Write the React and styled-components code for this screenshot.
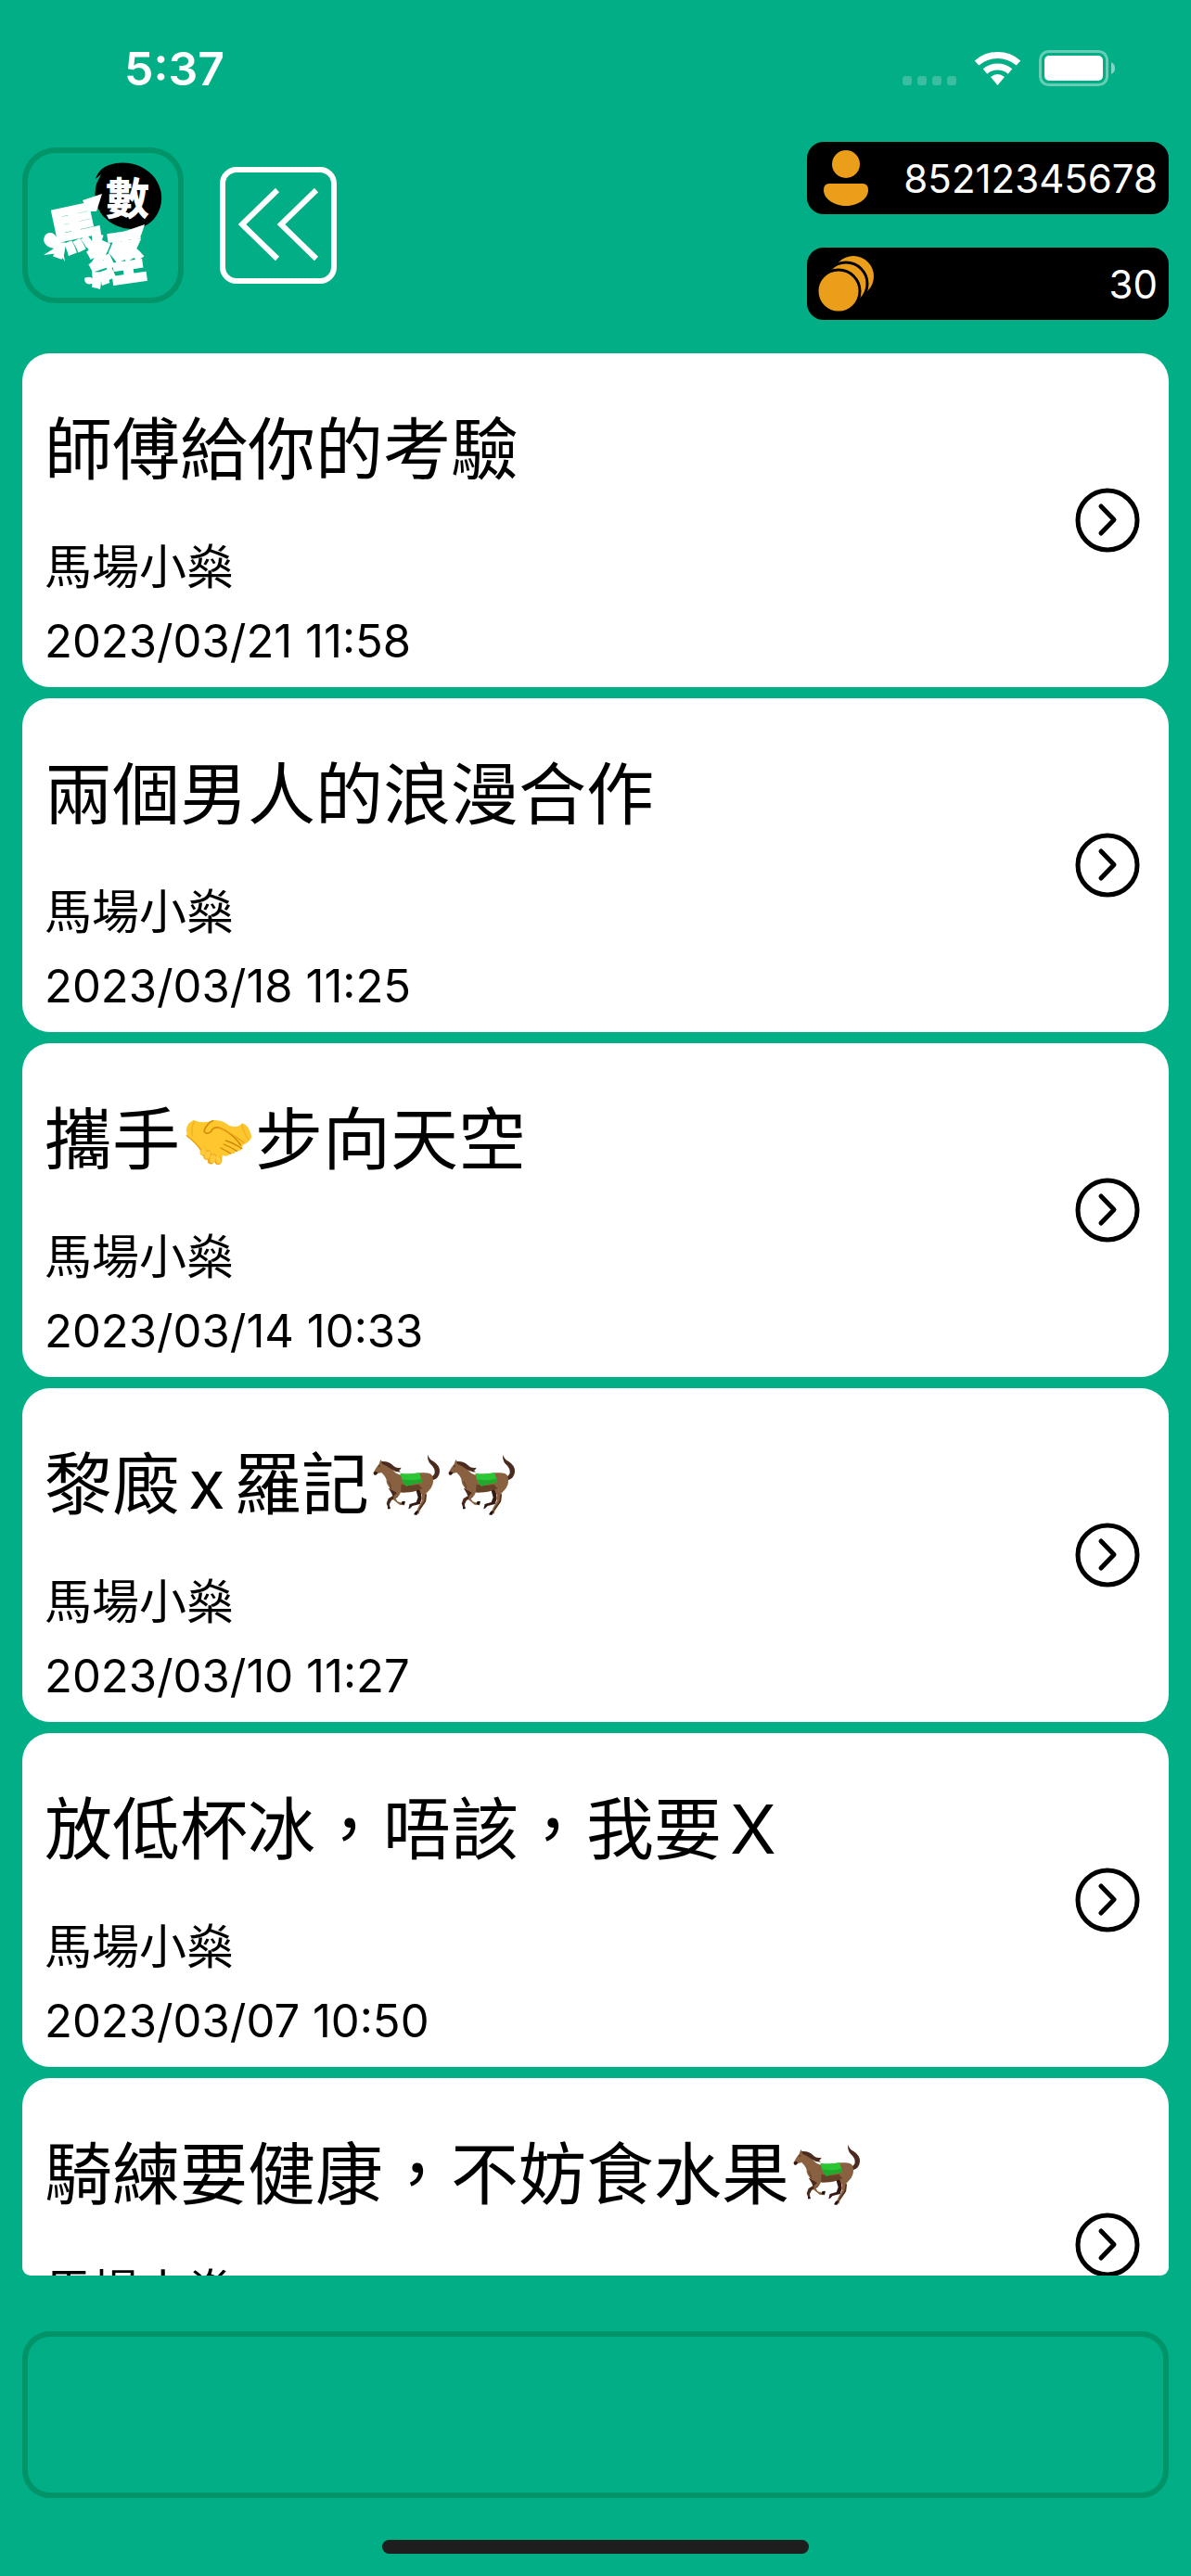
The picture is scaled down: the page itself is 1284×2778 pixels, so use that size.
import React from "react"
import styled, { createGlobalStyle } from "styled-components"

const articles = [
  { id: 1, title: ["師傅給你的考驗"], author: "馬場小燊", date: "2023/03/21 11:58" },
  { id: 2, title: ["兩個男人的浪漫合作"], author: "馬場小燊", date: "2023/03/18 11:25" },
  { id: 3, title: ["攜手", "handshake", "步向天空"], author: "馬場小燊", date: "2023/03/14 10:33" },
  { id: 4, title: ["黎廄x羅記", "horse", "horse"], author: "馬場小燊", date: "2023/03/10 11:27" },
  { id: 5, title: ["放低杯冰，唔該，我要X"], author: "馬場小燊", date: "2023/03/07 10:50" },
  { id: 6, title: ["騎練要健康，不妨食水果", "horse"], author: "馬場小燊" },
]

const Horse = () => (
  <Emoji viewBox="0 -6 243 222" role="img" aria-label="馬">
    <path d="M186 84 Q206 82 212 68 Q214 52 198 38 Q187 26 190 8 Q193 22 208 30 Q230 44 228 64 Q226 84 208 90Z" fill="#4b2b20" />
    <path d="M150 118 L158 146 L152 162 L131 168 L127 184 L132 182 L140 174 L164 168 L170 150 L166 120Z" fill="#351811" />
    <path d="M62 116 L72 132 L76 142 L62 150 L56 166 L62 184 L67 180 L66 168 L72 156 L92 146 L96 130Z" fill="#4a2a1c" />
    <path d="M14 66 Q20 52 32 38 L37 24 L44 34 Q66 44 82 64 Q94 76 114 74 L168 67 Q198 64 204 76 Q212 98 200 116 Q190 128 184 134 L184 158 L166 184 L160 200 L150 198 L158 180 L170 158 L170 138 L160 118 Q130 132 102 130 L96 142 L84 148 L92 160 L106 164 L116 160 L114 172 L98 170 L78 154 L80 142 L90 132 Q60 118 56 96 Q58 84 40 66 L24 70 Q14 80 14 66Z" fill="#8a6140" />
    <path d="M14 66 L22 62 L28 68 L22 74 Q14 76 14 66Z" fill="#2f1711" />
    <path d="M40 30 Q62 28 76 42 Q86 54 104 50 Q100 58 96 60 L102 64 Q86 66 70 54 Q54 42 42 38Z" fill="#4b2b20" />
    <path d="M104 104 Q132 112 160 104 L172 118 Q138 134 102 130Z" fill="#654128" />
    <path d="M62 94 Q72 108 70 122" stroke="#6c452c" strokeWidth="4" fill="none" />
    <path d="M184 136 L180 160 L162 186" stroke="#55301f" strokeWidth="5" fill="none" />
    <path d="M150 192 L160 188 L154 204 L144 202Z M60 178 L68 178 L68 184 L60 184Z M106 160 L116 158 L114 170 L104 168Z" fill="#21100c" />
    <circle cx="33" cy="45" r="2" fill="#1d0e0a" />
    <path d="M100 68 Q134 72 162 66 L172 98 Q146 100 120 110 L108 96Z" fill="#2ac634" />
    <path d="M108 88 Q138 94 168 86 L172 98 Q146 100 120 110 L108 96Z" fill="#22a92d" />
  </Emoji>
)

const Handshake = () => (
  <Emoji viewBox="0 -10 243 222" role="img" aria-label="握手">
    <path d="M20 68 Q26 44 44 38 Q76 52 108 38 Q138 36 160 56 Q190 64 202 48 Q222 52 232 92 Q224 112 204 118 L198 134 Q190 140 182 136 Q176 150 164 146 Q154 158 138 152 L134 168 Q136 180 124 182 Q112 182 112 170 Q110 180 98 180 Q88 178 90 166 Q76 168 76 154 Q62 152 66 138 Q58 120 24 92Z" fill="#fdc72d" />
    <path d="M66 132 Q78 124 86 136 Q98 130 102 148 Q116 144 118 154 Q134 150 136 168 Q134 182 124 182 Q112 182 112 170 Q108 182 98 180 Q88 178 90 166 Q76 168 76 154 Q62 152 66 132Z" fill="#efa920" />
    <g fill="#ffcb3c">
      <ellipse cx="75" cy="140" rx="8" ry="11" transform="rotate(20 75 140)" />
      <ellipse cx="89" cy="151" rx="9" ry="13" transform="rotate(18 89 151)" />
      <ellipse cx="106" cy="163" rx="9" ry="13" transform="rotate(12 106 163)" />
      <ellipse cx="124" cy="166" rx="8" ry="13" transform="rotate(-16 124 166)" />
    </g>
    <path d="M106 40 Q86 48 78 74 Q84 86 100 76 Q106 60 126 62 Q166 76 196 118" fill="none" stroke="#d48a0d" strokeWidth="5" strokeLinecap="round" />
    <path d="M148 104 Q174 112 200 130 M142 116 Q166 126 184 138 M132 128 Q152 138 164 146" fill="none" stroke="#cf850b" strokeWidth="4" strokeLinecap="round" />
    <path d="M22 88 Q58 116 66 132 M128 62 Q160 76 206 110" fill="none" stroke="#e9a21b" strokeWidth="4" strokeLinecap="round" />
    <path d="M46 42 Q36 62 40 88 M200 52 Q206 80 222 100" fill="none" stroke="#f2b122" strokeWidth="4" strokeLinecap="round" />
  </Emoji>
)

const emojis = { horse: Horse, handshake: Handshake }

const StatusIcons = () => (
  <svg width="230" height="42" viewBox="0 0 230 42" aria-hidden="true">
    <g fill="#fff" fillOpacity="0.22">
      <rect x="1" y="29" width="10" height="10" rx="3" />
      <rect x="17" y="29" width="10" height="10" rx="3" />
      <rect x="33" y="29" width="10" height="10" rx="3" />
      <rect x="49" y="29" width="10" height="10" rx="3" />
    </g>
    <g fill="none" stroke="#fff">
      <path d="M81 15 A34 34 0 0 1 126 15" strokeWidth="7" />
      <path d="M90 24 A21 21 0 0 1 117 24" strokeWidth="7" />
    </g>
    <path d="M96 30 Q103.500 24 111 30 L103.500 39Z" fill="#fff" />
    <rect x="149.500" y="2.500" width="72" height="36" rx="9" fill="none" stroke="#fff" strokeOpacity="0.4" strokeWidth="3" />
    <rect x="154" y="7" width="63" height="27" rx="5" fill="#fff" />
    <path d="M226 14 Q230 16 230 20.500 Q230 25 226 27Z" fill="#fff" fillOpacity="0.5" />
  </svg>
)

const Logo = () => (
  <LogoMark viewBox="0 0 145 155" role="img" aria-label="數馬經">
    <path d="M64 27 Q68 13 86 10 Q112 7 128 26 Q140 44 132 62 Q124 80 102 81 Q84 80 72 67 Q60 52 65 32 L70 22Z" fill="#000" />
    {/* brush flicks around the characters */}
    <g fill="#fff">
      <path d="M8 93 Q9 84 17 85 Q23 88 26 98 L29 105 L31 116 L25 107 L8 109 L19 102 Q9 100 8 93Z" />
      <path d="M50 50 L71 43 L65 62 L56 62Z" />
      <path d="M94 84 L117 76 L113 88 L96 92Z" />
      <path d="M52 134 Q60 130 63 138 L68 146 L60 140 Q52 142 52 134Z" />
    </g>
    <g fill="#fff" stroke="#fff" fontFamily='"Noto Sans CJK TC", sans-serif' fontWeight="900">
      <text x="75" y="65" fontSize="47" strokeWidth="0">數</text>
      <text x="13" y="104" fontSize="57" strokeWidth="2" transform="rotate(-12 40 80)">馬</text>
      <text x="56" y="136" fontSize="61" strokeWidth="2" transform="rotate(-8 86 114)">經</text>
    </g>
  </LogoMark>
)

const UserIcon = () => (
  <svg width="60" height="60" viewBox="0 0 60 60" aria-hidden="true">
    <g fill="#eb9e19">
      <circle cx="30" cy="15" r="15" />
      <path d="M12 36 H48 Q54 36 54 43 C54 53 42 60 30 60 C18 60 6 53 6 43 Q6 36 12 36Z" />
    </g>
  </svg>
)

const CoinsIcon = () => (
  <svg width="60" height="60" viewBox="0 0 60 60" aria-hidden="true">
    <g fill="#eb9e19">
      <circle cx="38" cy="22" r="22" />
      <circle cx="30" cy="30" r="23" stroke="#000" strokeWidth="3" />
      <circle cx="22" cy="38" r="23" stroke="#000" strokeWidth="3" />
    </g>
  </svg>
)

const ArticleCard = ({ title, author, date }) => {
  return (
    <li>
      <Card href="#article">
        <Details>
          <Title>
            {title.map((part, i) => {
              const Icon = emojis[part]
              return Icon ? <Icon key={i} /> : <span key={i}>{part}</span>
            })}
          </Title>
          <Author>{author}</Author>
          {date && <PublishedAt>{date}</PublishedAt>}
        </Details>
        <svg width="70" height="70" viewBox="0 0 70 70" aria-hidden="true">
          <g fill="none" stroke="#000" strokeWidth="5">
            <circle cx="35" cy="35" r="32" />
            <path d="M28 20 L42 34.500 L28 49" strokeLinecap="round" strokeLinejoin="round" />
          </g>
        </svg>
      </Card>
    </li>
  )
}

const App = () => {
  return (
    <>
      <GlobalStyle />
      <Page lang="zh-Hant">
        <StatusBar>
          <Time>5:37</Time>
          <StatusIcons />
        </StatusBar>
        <Header>
          <Nav>
            <LogoBox>
              <Logo />
            </LogoBox>
            <BackButton type="button" aria-label="返回">
              <svg width="88" height="80" viewBox="0 0 88 80" aria-hidden="true">
                <path d="M43 2 L5 39 L43 76 M85 2 L47 39 L85 76" fill="none" stroke="#fff" strokeWidth="6" />
              </svg>
            </BackButton>
          </Nav>
          <Account>
            <Pill>
              <UserIcon />
              <span>85212345678</span>
            </Pill>
            <Pill>
              <CoinsIcon />
              <span>30</span>
            </Pill>
          </Account>
        </Header>
        <List>
          {articles.map((article) => (
            <ArticleCard key={article.id} {...article} />
          ))}
        </List>
        <Banner />
        <HomeIndicator />
      </Page>
    </>
  )
}

export default App

const GlobalStyle = createGlobalStyle`
  * {
    box-sizing: border-box;
  }

  body {
    margin: 0;
    background: #02ae86;
    font-family: Inter, "Noto Sans CJK TC", sans-serif;
    color: #000;
  }
`

const Page = styled.div`
  display: flex;
  flex-direction: column;
  height: 100vh;
  padding: 0 24px;
  overflow: hidden;
`

const StatusBar = styled.div`
  display: flex;
  justify-content: space-between;
  align-items: center;
  flex-shrink: 0;
  height: 147px;
  padding: 0 58px 0 110px;
`

const Time = styled.span`
  font-size: 50px;
  font-weight: 600;
  line-height: 60px;
  color: #fff;
`

const Header = styled.header`
  display: flex;
  justify-content: space-between;
  align-items: flex-start;
  flex-shrink: 0;
  padding: 6px 0 36px;
`

const Nav = styled.nav`
  display: flex;
  align-items: center;
  gap: 39px;
  padding-top: 6px;
`

const LogoBox = styled.div`
  display: flex;
  justify-content: center;
  align-items: center;
  width: 174px;
  height: 168px;
  border: 6px solid #009468;
  border-radius: 36px;
`

const LogoMark = styled.svg`
  width: 145px;
  height: 155px;
  overflow: visible;
`

const BackButton = styled.button`
  display: flex;
  justify-content: center;
  align-items: center;
  width: 126px;
  height: 126px;
  padding: 0;
  border: 6px solid #fff;
  border-radius: 18px;
  background: none;
  cursor: pointer;
`

const Account = styled.div`
  display: flex;
  flex-direction: column;
  gap: 36px;
  width: 390px;
`

const Pill = styled.div`
  display: flex;
  justify-content: space-between;
  align-items: center;
  height: 78px;
  padding: 0 12px;
  border-radius: 18px;
  background: #000;
  font-size: 42px;
  color: #fff;
`

const List = styled.ul`
  display: flex;
  flex-direction: column;
  gap: 12px;
  flex: 1;
  min-height: 0;
  margin: 0;
  padding: 0;
  border-radius: 9px;
  list-style: none;
  overflow: hidden;
`

const Card = styled.a`
  display: flex;
  justify-content: space-between;
  align-items: center;
  height: 360px;
  padding: 0 31px 0 24px;
  border-radius: 30px;
  background: #fff;
  color: inherit;
  text-decoration: none;
`

const Details = styled.div`
  display: flex;
  flex-direction: column;
  height: 100%;
  padding-top: 54px;
`

const Title = styled.h2`
  display: flex;
  align-items: center;
  margin: 0 0 37px;
  font-size: 73px;
  font-weight: 400;
  line-height: 100px;
  white-space: nowrap;
  text-autospace: normal;
`

const Author = styled.p`
  margin: 0;
  font-size: 51px;
  line-height: 80px;
`

const PublishedAt = styled.p`
  margin: 0;
  font-size: 49px;
  line-height: 80px;
`

const Emoji = styled.svg`
  flex-shrink: 0;
  width: 81px;
  height: 74px;
`

const Banner = styled.aside`
  flex-shrink: 0;
  height: 180px;
  margin-top: 60px;
  border: 6px solid #009468;
  border-radius: 30px;
`

const HomeIndicator = styled.div`
  flex-shrink: 0;
  align-self: center;
  width: 460px;
  height: 15px;
  margin: 45px 0 24px;
  border-radius: 8px;
  background: #1e1e1e;
`
